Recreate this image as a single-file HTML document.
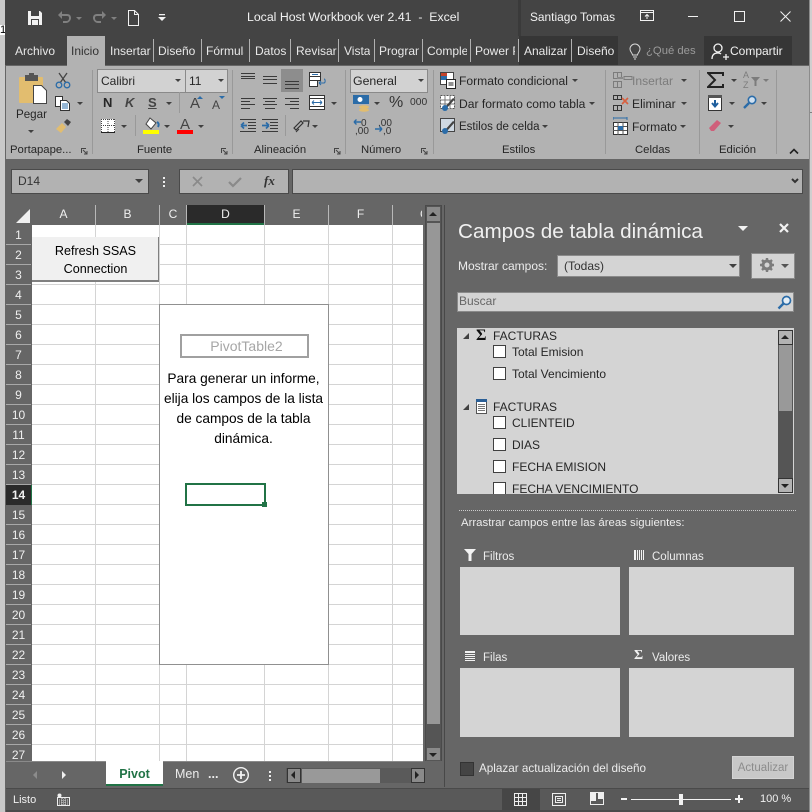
<!DOCTYPE html>
<html><head><meta charset="utf-8">
<style>
html,body{margin:0;padding:0;background:#fff}
#r{position:relative;width:812px;height:812px;overflow:hidden;background:#666;font-family:"Liberation Sans",sans-serif;font-size:12px;color:#262626}
#r div,#r span.t,#r svg{position:absolute}
.t{position:absolute;white-space:nowrap;line-height:16px}
.tab{position:absolute;top:43px;color:#e8e8e8;font-size:12px;white-space:nowrap;line-height:16px;overflow:hidden}
.sep{background:#b0b0b0;width:1px;top:39px;height:23px}
.rs{background:#999;width:1px;top:70px;height:84px}
.ar{width:0;height:0;border-left:3px solid transparent;border-right:3px solid transparent;border-top:3px solid #404040}
.gl{background:#d4d4d4;width:1px;top:225px;height:536px}
.ch{top:205px;height:19px;color:#f0f0f0;text-align:center;line-height:19px;font-size:12px}
.rh{left:6px;width:25px;height:19px;border-bottom:1px solid #a8a8a8;color:#f0f0f0;text-align:center;line-height:21px;font-size:12px;background:#666}
.g{color:#262626;font-size:12.1px}
.pl{color:#ececec;font-size:12px}
.area{background:#d4d4d4}
.cb{left:493px;width:11px;height:11px;background:#fff;border:1px solid #404040}
.f{left:512px;color:#262626;font-size:12px}
</style></head><body><div id="r">

<!-- outer edge -->
<div style="left:0;top:0;width:5px;height:812px;background:#c9c9c9"></div>
<div style="left:0;top:25px;width:5px;height:10px;background:#fff"></div>
<span class="t" style="left:0;top:22px;font-size:11px;color:#000;width:5px;overflow:hidden">1</span>

<!-- title -->
<div style="left:5px;top:0;width:807px;height:65px;background:#444"></div>
<div style="left:518px;top:0;width:3px;height:36px;background:#3a3a3a"></div>
<svg style="left:27px;top:10px" width="16" height="16" viewBox="0 0 16 16"><path d="M1 1h12l2 2v12H1z" fill="#f2f2f2"/><rect x="4" y="1" width="8" height="5" fill="#444"/><rect x="4" y="9" width="8" height="6" fill="#444"/><rect x="5" y="10" width="6" height="5" fill="#f2f2f2"/></svg>
<svg style="left:56px;top:10px" width="30" height="16" viewBox="0 0 30 16"><path d="M2 5l4-4v3h5c3 0 4 2 4 4s-2 5-5 5H7v-2h3c2 0 3-1 3-3s-1-2-3-2H6v3z" fill="#808080"/><path d="M20 7h6l-3 3z" fill="#808080"/></svg>
<svg style="left:91px;top:10px" width="30" height="16" viewBox="0 0 30 16"><path d="M15 5l-4-4v3H6c-3 0-4 2-4 4s2 5 5 5h3v-2H7c-2 0-3-1-3-3s1-2 3-2h4v3z" fill="#808080"/><path d="M20 7h6l-3 3z" fill="#808080"/></svg>
<svg style="left:127px;top:10px" width="13" height="16" viewBox="0 0 13 16"><path d="M1.500.5h6l4 4v11h-10z M7.500.5v4h4" fill="none" stroke="#f2f2f2"/></svg>
<svg style="left:158px;top:14px" width="9" height="8" viewBox="0 0 9 8"><path d="M1 0h6v1.300H1zM0 3h8L4 7z" fill="#f2f2f2"/></svg>
<span class="t" style="left:247px;top:9px;color:#f2f2f2;font-size:12.3px">Local Host Workbook ver 2.41&nbsp; -&nbsp; Excel</span>
<span class="t" style="left:530px;top:9px;color:#f2f2f2;font-size:11.9px">Santiago Tomas</span>
<svg style="left:640px;top:10px" width="14" height="12" viewBox="0 0 14 12"><path d="M.5.500h13v10H.5zM.5 2.500h13M7 9V4.500M5 6.500l2-2 2 2" fill="none" stroke="#f2f2f2"/></svg>
<div style="left:688px;top:16px;width:10px;height:1px;background:#f2f2f2"></div>
<div style="left:734px;top:11px;width:9px;height:9px;border:1px solid #f2f2f2"></div>
<svg style="left:780px;top:11px" width="11" height="11" viewBox="0 0 11 11"><path d="M.5.500l10 10M10.500.500l-10 10" stroke="#f2f2f2" fill="none"/></svg>

<!-- tabs -->
<div style="left:519px;top:36px;width:99px;height:29px;background:#363636"></div>
<div style="left:704px;top:36px;width:88px;height:29px;background:#363636"></div>
<div style="left:67px;top:36px;width:38px;height:30px;background:#b2b2b2"></div>
<span class="tab" style="left:15px">Archivo</span>
<span class="tab" style="left:71px;color:#333">Inicio</span>
<span class="tab" style="left:110px">Insertar</span>
<div class="sep" style="left:153px"></div>
<span class="tab" style="left:158px">Diseño</span>
<div class="sep" style="left:201px"></div>
<span class="tab" style="left:206px;width:38px">Fórmulas</span>
<div class="sep" style="left:249px"></div>
<span class="tab" style="left:255px">Datos</span>
<div class="sep" style="left:290px"></div>
<span class="tab" style="left:296px">Revisar</span>
<div class="sep" style="left:338px"></div>
<span class="tab" style="left:344px">Vista</span>
<div class="sep" style="left:374px"></div>
<span class="tab" style="left:379px;width:40px">Programador</span>
<div class="sep" style="left:422px"></div>
<span class="tab" style="left:427px;width:40px">Complementos</span>
<div class="sep" style="left:470px"></div>
<span class="tab" style="left:475px;width:40px">Power Pivot</span>
<div class="sep" style="left:518px"></div>
<span class="tab" style="left:524px">Analizar</span>
<div class="sep" style="left:571px"></div>
<span class="tab" style="left:577px">Diseño</span>
<svg style="left:628px;top:43px" width="14" height="17" viewBox="0 0 14 17"><path d="M4.500 12c0-2-2.500-3-2.500-6a5 5 0 0 1 10 0c0 3-2.500 4-2.500 6zM5 14h4M6 16h2" fill="none" stroke="#d8d8d8"/></svg>
<span class="tab" style="left:646px;color:#9a9a9a;font-size:11.3px">¿Qué des</span>
<svg style="left:711px;top:43px" width="18" height="17" viewBox="0 0 18 17"><circle cx="7" cy="5" r="4" fill="none" stroke="#f2f2f2" stroke-width="1.300"/><path d="M1 16c0-4 2-6 6-6 1.500 0 2.500.5 3 1M12 14h6M15 11v6" fill="none" stroke="#f2f2f2" stroke-width="1.300"/></svg>
<span class="tab" style="left:730px;color:#f2f2f2">Compartir</span>

<!-- ribbon -->
<div style="left:6px;top:66px;width:803px;height:93px;background:#b2b2b2"></div>
<div class="rs" style="left:92px"></div><div class="rs" style="left:232px"></div><div class="rs" style="left:345px"></div><div class="rs" style="left:433px"></div><div class="rs" style="left:605px"></div><div class="rs" style="left:699px"></div><div class="rs" style="left:776px"></div>

<!-- clipboard -->
<svg style="left:18px;top:73px" width="30" height="32" viewBox="0 0 30 32"><rect x="1" y="4" width="24" height="26" rx="1" fill="#e2bd6f"/><rect x="7" y="2" width="13" height="6" fill="#555"/><rect x="11" y="0" width="5" height="3" fill="#555"/><path d="M15.500 12.500h8l5 5v13h-13z" fill="#fff" stroke="#444"/></svg>
<span class="t" style="left:16px;top:107px;font-size:11.6px">Pegar</span>
<div class="ar" style="left:28px;top:130px"></div>
<svg style="left:55px;top:72px" width="16" height="17" viewBox="0 0 16 17"><path d="M4 1l7 10M12 1L5 11" stroke="#444" stroke-width="1.300" fill="none"/><circle cx="4" cy="13" r="2.800" fill="none" stroke="#2b6ca8" stroke-width="1.300"/><circle cx="12" cy="13" r="2.800" fill="none" stroke="#2b6ca8" stroke-width="1.300"/></svg>
<svg style="left:55px;top:96px" width="16" height="15" viewBox="0 0 16 15"><path d="M.5.500h7v10h-7z" fill="#fff" stroke="#333"/><path d="M5.500 4.500h6l3 3v7h-9z" fill="#fff" stroke="#333"/><path d="M7 8h6M7 10h6M7 12h6" stroke="#2b6ca8"/></svg>
<div class="ar" style="left:77px;top:102px"></div>
<svg style="left:55px;top:118px" width="17" height="16" viewBox="0 0 17 16"><path d="M1 11l6-6 4 4-5 6z" fill="#e2bd6f"/><path d="M9 4l3-3 4 3-3 4z" fill="#444"/></svg>
<span class="t" style="left:10px;top:142px;font-size:11.3px">Portapape...</span>
<svg style="left:81px;top:148px" width="7" height="7" viewBox="0 0 7 7"><path d="M.5 5V.5H5M2 2l4 4M6 3v3H3" fill="none" stroke="#444"/></svg>

<!-- font -->
<div style="left:97px;top:69px;width:87px;height:22px;background:#d2d2d2;border:1px solid #8a8a8a"></div>
<div style="left:185px;top:69px;width:41px;height:22px;background:#d2d2d2;border:1px solid #8a8a8a"></div>
<span class="t" style="left:101px;top:73px;font-size:12px">Calibri</span>
<span class="t" style="left:189px;top:73px;font-size:12px">11</span>
<div class="ar" style="left:175px;top:79px"></div><div class="ar" style="left:218px;top:79px"></div>
<span class="t" style="left:103px;top:95px;font-weight:bold;font-size:13px">N</span>
<span class="t" style="left:125px;top:95px;font-weight:bold;font-style:italic;font-size:13px;color:#444">K</span>
<span class="t" style="left:148px;top:95px;font-weight:bold;font-size:13px;color:#444;text-decoration:underline">S</span>
<div class="ar" style="left:166px;top:102px"></div>
<div style="left:179px;top:92px;width:1px;height:21px;background:#999"></div>
<span class="t" style="left:190px;top:96px;font-size:15px;color:#444">A</span>
<div style="left:197px;top:96px;width:0;height:0;border-left:3px solid transparent;border-right:3px solid transparent;border-bottom:3px solid #2b6ca8"></div>
<span class="t" style="left:212px;top:97px;font-size:12px;color:#444">A</span>
<div style="left:219px;top:96px;width:0;height:0;border-left:3px solid transparent;border-right:3px solid transparent;border-top:3px solid #2b6ca8"></div>
<svg style="left:101px;top:119px" width="14" height="14" viewBox="0 0 14 14"><rect width="14" height="13" fill="#fff"/><path d="M0 .500h14M.5 0v13M13.500 0v13M0 6.500h14M7 0v13" stroke="#444" stroke-dasharray="1 1" fill="none"/><path d="M0 13.500h14" stroke="#222"/></svg>
<div class="ar" style="left:121px;top:125px"></div>
<div style="left:135px;top:115px;width:1px;height:21px;background:#999"></div>
<svg style="left:145px;top:117px" width="15" height="13" viewBox="0 0 15 13"><path d="M5 1l6 5-5 6-5-5z" fill="#fff" stroke="#444"/><path d="M12 5c2 1 2 3 1 5" stroke="#2b6ca8" stroke-width="2" fill="none"/></svg>
<div style="left:143px;top:130px;width:16px;height:4px;background:#ffff00"></div>
<div class="ar" style="left:164px;top:125px"></div>
<span class="t" style="left:180px;top:117px;font-size:15px;color:#444">A</span>
<div style="left:177px;top:130px;width:16px;height:4px;background:#ff0000"></div>
<div class="ar" style="left:198px;top:125px"></div>
<span class="t" style="left:137px;top:142px;font-size:11.3px">Fuente</span>
<svg style="left:221px;top:148px" width="7" height="7" viewBox="0 0 7 7"><path d="M.5 5V.5H5M2 2l4 4M6 3v3H3" fill="none" stroke="#444"/></svg>

<!-- alignment -->
<div style="left:281px;top:69px;width:22px;height:23px;background:#8d8d8d"></div>
<svg style="left:240px;top:71px" width="60" height="18" viewBox="0 0 60 18"><path d="M1 2.500h14M1 5.500h14M1 7.500h14M23 5.500h14M23 8.500h14M23 12.500h14M45 10.500h14M45 13.500h14M45 17.500h14" stroke="#3a3a3a"/></svg>
<svg style="left:309px;top:72px" width="17" height="16" viewBox="0 0 17 16"><path d="M.5.500h11v4H.5zM.5 4.500h11v4H.5zM.5 8.500h8v6H.5z" fill="#fff" stroke="#333"/><path d="M3 2.500h6" stroke="#2b6ca8"/><path d="M10 11h5c1.500 0 1.500-4 0-4M10 11l2-2M10 11l2 2" stroke="#2b6ca8" fill="none"/></svg>
<svg style="left:240px;top:97px" width="60" height="12" viewBox="0 0 60 12"><path d="M1 1.500h14M1 4.500h9M1 7.500h14M1 11.500h9M23 1.500h14M25 4.500h10M23 7.500h14M25 11.500h10M45 1.500h14M50 4.500h9M45 7.500h14M50 11.500h9" stroke="#3a3a3a"/></svg>
<svg style="left:309px;top:95px" width="16" height="15" viewBox="0 0 16 15"><path d="M.5.500h15v14H.5z" fill="#fff" stroke="#333"/><path d="M0 3.500h16M0 11.500h16" stroke="#333"/><path d="M3 7.500h10M3 7.500l2-2M3 7.500l2 2M13 7.500l-2-2M13 7.500l-2 2" stroke="#2b6ca8" fill="none"/></svg>
<div class="ar" style="left:331px;top:102px"></div>
<svg style="left:240px;top:119px" width="38" height="13" viewBox="0 0 38 13"><path d="M0 .500h16M8 3.500h8M8 6.500h8M8 9.500h8M0 12.500h16M22 .500h16M30 3.500h8M30 6.500h8M30 9.500h8M22 12.500h16" stroke="#3a3a3a"/><path d="M1 6.500h6M1 6.500l3-3M1 6.500l3 3M22 6.500h7M29 6.500l-3-3M29 6.500l-3 3" stroke="#2b6ca8" stroke-width="1.700" fill="none"/></svg>
<div style="left:285px;top:115px;width:1px;height:21px;background:#999"></div>
<svg style="left:293px;top:119px" width="17" height="15" viewBox="0 0 17 15"><path d="M1 9l7-7 2 2-7 7zM10 2l6 0-1 6" fill="none" stroke="#333" stroke-width="1.200"/><path d="M3 13l3-3" stroke="#333"/></svg>
<div class="ar" style="left:312px;top:125px"></div>
<span class="t" style="left:254px;top:142px;font-size:11.3px">Alineación</span>
<svg style="left:334px;top:148px" width="7" height="7" viewBox="0 0 7 7"><path d="M.5 5V.5H5M2 2l4 4M6 3v3H3" fill="none" stroke="#444"/></svg>

<!-- number -->
<div style="left:350px;top:69px;width:76px;height:22px;background:#d2d2d2;border:1px solid #8a8a8a"></div>
<span class="t" style="left:353px;top:73px;font-size:12.3px">General</span>
<div class="ar" style="left:418px;top:79px"></div>
<svg style="left:353px;top:95px" width="18" height="17" viewBox="0 0 18 17"><rect width="16" height="9" fill="#2b6ca8"/><circle cx="7" cy="4.500" r="2.500" fill="#fff"/><ellipse cx="11" cy="12" rx="5" ry="1.800" fill="#e2bd6f"/><ellipse cx="11" cy="15" rx="5" ry="1.800" fill="#e2bd6f"/></svg>
<div class="ar" style="left:374px;top:102px"></div>
<span class="t" style="left:389px;top:95px;font-size:16px;color:#333">%</span>
<span class="t" style="left:410px;top:95px;font-size:10.3px;color:#333">000</span>
<svg style="left:353px;top:119px" width="8" height="6" viewBox="0 0 8 6"><path d="M1 3h7M1 3l2.500-2.500M1 3l2.500 2.500" stroke="#2b6ca8" stroke-width="1.400" fill="none"/></svg>
<span class="t" style="left:361px;top:116px;font-size:10px;color:#333">0</span>
<span class="t" style="left:355px;top:124px;font-size:10px;color:#333">,00</span>
<span class="t" style="left:378px;top:116px;font-size:10px;color:#333">,00</span>
<svg style="left:375px;top:126px" width="8" height="6" viewBox="0 0 8 6"><path d="M0 3h7M7 3L4.500.5M7 3L4.500 5.500" stroke="#2b6ca8" stroke-width="1.400" fill="none"/></svg>
<span class="t" style="left:383px;top:124px;font-size:10px;color:#333">,0</span>
<span class="t" style="left:361px;top:142px;font-size:11.3px">Número</span>
<svg style="left:421px;top:148px" width="7" height="7" viewBox="0 0 7 7"><path d="M.5 5V.5H5M2 2l4 4M6 3v3H3" fill="none" stroke="#444"/></svg>

<!-- styles -->
<svg style="left:440px;top:72px" width="16" height="17" viewBox="0 0 16 17"><rect x=".5" y=".5" width="13" height="12" fill="#fff" stroke="#444"/><rect x="1" y="1" width="6" height="3" fill="#c5432a"/><rect x="1" y="4" width="6" height="4" fill="#2b6ca8"/><rect x="6.500" y="7.500" width="9" height="9" fill="#fff" stroke="#222"/><path d="M8.500 11h5M8.500 13h5" stroke="#222"/></svg>
<span class="t g" style="left:459px;top:73px">Formato condicional</span><div class="ar" style="left:572px;top:79px"></div>
<svg style="left:440px;top:95px" width="16" height="17" viewBox="0 0 16 17"><rect x=".5" y=".5" width="14" height="13" fill="#fff" stroke="#555" stroke-dasharray="2 1"/><path d="M0 5h14M0 9h14M5 0v14M10 0v14" stroke="#777"/><path d="M15 4l-8 9-3 3 1-4 8-9z" fill="#444"/><circle cx="5" cy="13" r="3" fill="#2b6ca8"/></svg>
<span class="t g" style="left:459px;top:96px">Dar formato como tabla</span><div class="ar" style="left:589px;top:102px"></div>
<svg style="left:440px;top:118px" width="16" height="17" viewBox="0 0 16 17"><rect x=".5" y=".5" width="14" height="13" fill="#cfd9e3" stroke="#444"/><path d="M15 4l-8 9-3 3 1-4 8-9z" fill="#444"/><circle cx="5" cy="13" r="3" fill="#2b6ca8"/></svg>
<span class="t g" style="left:459px;top:119px;font-size:11.5px">Estilos de celda</span><div class="ar" style="left:542px;top:125px"></div>
<span class="t" style="left:502px;top:142px;font-size:11.3px">Estilos</span>

<!-- cells -->
<svg style="left:613px;top:72px" width="20" height="16" viewBox="0 0 20 16"><path d="M.5.500h8v6h-8zM.5 9.500h8v6h-8zM4.500 9v7M4.500 0v7M11 4.500h8v3h-8z" fill="none" stroke="#7c7c7c"/><path d="M10 6H4" stroke="#8a8a8a" stroke-width="2"/></svg>
<span class="t g" style="left:632px;top:73px;color:#7c7c7c">Insertar</span><div class="ar" style="left:681px;top:79px"></div>
<svg style="left:613px;top:95px" width="20" height="16" viewBox="0 0 20 16"><path d="M.5.500h8v4h-8zM.5 10.500h8v5h-8zM4.500 10v6M4.500 0v5" fill="none" stroke="#333"/><path d="M9 3l6 6M15 3l-6 6" stroke="#d8603f" stroke-width="1.600"/></svg>
<span class="t g" style="left:632px;top:96px">Eliminar</span><div class="ar" style="left:681px;top:102px"></div>
<svg style="left:613px;top:117px" width="18" height="18" viewBox="0 0 18 18"><path d="M0 1h14M0 0v3M14 0v3" stroke="#2b6ca8"/><rect x=".5" y="5.500" width="14" height="12" fill="#fff" stroke="#333"/><path d="M0 9.500h14M0 13.500h14M5 5v13M10 5v13" stroke="#555"/><rect x="5" y="9" width="5" height="4" fill="#2b6ca8"/></svg>
<span class="t g" style="left:632px;top:119px">Formato</span><div class="ar" style="left:680px;top:125px"></div>
<span class="t" style="left:635px;top:142px;font-size:11.3px">Celdas</span>

<!-- edit -->
<svg style="left:707px;top:72px" width="17" height="16" viewBox="0 0 17 16"><path d="M16 4V1H1l7 7-7 7h15v-3" fill="none" stroke="#222" stroke-width="2"/></svg>
<div class="ar" style="left:731px;top:79px"></div>
<span class="t" style="left:743px;top:70px;font-size:9px;line-height:10px;color:#7c7c7c;white-space:pre">A
Z</span>
<svg style="left:751px;top:77px" width="9" height="9" viewBox="0 0 9 9"><path d="M0 0h9L5.500 4v5h-2V4z" fill="#7c7c7c"/></svg>
<div class="ar" style="left:763px;top:79px;border-top-color:#7c7c7c"></div>
<svg style="left:708px;top:95px" width="14" height="16" viewBox="0 0 14 16"><rect x=".5" y=".5" width="13" height="15" fill="#fff" stroke="#333"/><rect x="0" y="0" width="14" height="3" fill="#555"/><path d="M7 5v6M4 8l3 3.500L10 8" stroke="#1f5f9e" stroke-width="2" fill="none"/></svg>
<div class="ar" style="left:729px;top:102px"></div>
<svg style="left:743px;top:95px" width="14" height="15" viewBox="0 0 14 15"><circle cx="9" cy="5" r="3.700" fill="#cfe0f0" stroke="#2b6ca8" stroke-width="1.600"/><path d="M6 8l-5 5" stroke="#2b6ca8" stroke-width="2.400"/></svg>
<div class="ar" style="left:761px;top:102px"></div>
<svg style="left:708px;top:119px" width="14" height="13" viewBox="0 0 14 13"><path d="M1 9l8-8 4 3-7 8H3z" fill="#cf5f7a"/></svg>
<div class="ar" style="left:728px;top:125px"></div>
<span class="t" style="left:719px;top:142px;font-size:11.3px">Edición</span>
<svg style="left:789px;top:148px" width="10" height="7" viewBox="0 0 10 7"><path d="M1 5.500l4-4 4 4" fill="none" stroke="#222" stroke-width="1.600"/></svg>

<!-- formula bar -->
<div style="left:6px;top:159px;width:803px;height:46px;background:#666"></div>
<div style="left:11px;top:169px;width:136px;height:23px;background:#b2b2b2;border:1px solid #4a4a4a"></div>
<span class="t" style="left:18px;top:173px;font-size:12px;color:#333">D14</span>
<div class="ar" style="left:135px;top:179px;border-left-width:4px;border-right-width:4px;border-top-width:4px"></div>
<div style="left:163px;top:177px;width:2px;height:2px;background:#eee;box-shadow:0 4px #eee,0 8px #eee"></div>
<div style="left:179px;top:169px;width:108px;height:23px;background:#b2b2b2;border:1px solid #4a4a4a"></div>
<svg style="left:191px;top:176px" width="13" height="12" viewBox="0 0 13 12"><path d="M2 1l9 9M11 1L2 10" stroke="#8a8a8a" stroke-width="1.700"/></svg>
<svg style="left:227px;top:176px" width="16" height="12" viewBox="0 0 16 12"><path d="M2 6l4 4 8-8" stroke="#8a8a8a" stroke-width="2.200" fill="none"/></svg>
<span class="t" style="left:264px;top:173px;font-family:'Liberation Serif',serif;font-style:italic;font-weight:bold;font-size:13px;color:#333">fx</span>
<div style="left:292px;top:169px;width:509px;height:23px;background:#b2b2b2;border:1px solid #4a4a4a"></div>
<svg style="left:791px;top:178px" width="8" height="6" viewBox="0 0 8 6"><path d="M1 1l3 3 3-3" fill="none" stroke="#333" stroke-width="2"/></svg>

<!-- headers -->
<div style="left:6px;top:205px;width:417px;height:20px;background:#666"></div>
<svg style="left:15px;top:209px" width="15" height="15" viewBox="0 0 15 15"><path d="M15 0v14H1z" fill="#f0f0f0"/></svg>
<div class="ch" style="left:32px;width:63px">A</div>
<div class="ch" style="left:96px;width:63px">B</div>
<div class="ch" style="left:160px;width:26px">C</div>
<div class="ch" style="left:187px;width:77px;background:#2a2a2a;height:18px;line-height:18px">D</div>
<div style="left:187px;top:223px;width:78px;height:2px;background:#217346"></div>
<div class="ch" style="left:265px;width:63px">E</div>
<div class="ch" style="left:329px;width:63px">F</div>
<div class="ch" style="left:393px;width:29px;overflow:hidden;text-align:left;padding-left:27px;box-sizing:border-box">G</div>
<div style="left:95px;top:205px;width:1px;height:20px;background:#b8b8b8"></div>
<div style="left:159px;top:205px;width:1px;height:20px;background:#b8b8b8"></div>
<div style="left:186px;top:205px;width:1px;height:20px;background:#b8b8b8"></div>
<div style="left:264px;top:205px;width:1px;height:20px;background:#b8b8b8"></div>
<div style="left:328px;top:205px;width:1px;height:20px;background:#b8b8b8"></div>
<div style="left:392px;top:205px;width:1px;height:20px;background:#b8b8b8"></div>

<!-- grid -->
<div style="left:32px;top:225px;width:391px;height:536px;background-color:#fff;background-image:repeating-linear-gradient(to bottom,transparent 0,transparent 19px,#d4d4d4 19px,#d4d4d4 20px)"></div>
<div class="gl" style="left:95px"></div><div class="gl" style="left:159px"></div><div class="gl" style="left:186px"></div><div class="gl" style="left:264px"></div><div class="gl" style="left:328px"></div><div class="gl" style="left:392px"></div>
<div class="rh" style="top:225px">1</div><div class="rh" style="top:245px">2</div><div class="rh" style="top:265px">3</div><div class="rh" style="top:285px">4</div><div class="rh" style="top:305px">5</div><div class="rh" style="top:325px">6</div><div class="rh" style="top:345px">7</div><div class="rh" style="top:365px">8</div><div class="rh" style="top:385px">9</div><div class="rh" style="top:405px">10</div><div class="rh" style="top:425px">11</div><div class="rh" style="top:445px">12</div><div class="rh" style="top:465px">13</div><div class="rh" style="top:485px;background:#2a2a2a;border-bottom-color:#2a2a2a;font-weight:bold">14</div><div class="rh" style="top:505px">15</div><div class="rh" style="top:525px">16</div><div class="rh" style="top:545px">17</div><div class="rh" style="top:565px">18</div><div class="rh" style="top:585px">19</div><div class="rh" style="top:605px">20</div><div class="rh" style="top:625px">21</div><div class="rh" style="top:645px">22</div><div class="rh" style="top:665px">23</div><div class="rh" style="top:685px">24</div><div class="rh" style="top:705px">25</div><div class="rh" style="top:725px">26</div><div class="rh" style="top:745px;height:16px;border:0;overflow:hidden">27</div>
<div style="left:31px;top:485px;width:1px;height:20px;background:#217346"></div>

<!-- button -->
<div style="left:32px;top:237px;width:126px;height:43px;background:#f0f0f0;border-right:1px solid #808080;border-bottom:2px solid #808080"></div>
<span class="t" style="left:32px;top:242px;width:127px;text-align:center;color:#000;font-size:12.6px;line-height:18px;white-space:normal">Refresh SSAS<br>Connection</span>

<!-- pivot box -->
<div style="left:159px;top:304px;width:168px;height:359px;background:#fff;border:1px solid #909090"></div>
<div style="left:180px;top:334px;width:125px;height:20px;border:2px solid #a0a0a0;background:#fff"></div>
<span class="t" style="left:182px;top:338px;width:129px;text-align:center;color:#a6a6a6;font-size:14px">PivotTable2</span>
<span class="t" style="left:160px;top:369px;width:167px;text-align:center;color:#000;font-size:13.7px;line-height:20px">Para generar un informe,<br>elija los campos de la lista<br>de campos de la tabla<br>dinámica.</span>
<div style="left:185px;top:483px;width:77px;height:19px;border:2px solid #217346"></div>
<div style="left:262px;top:502px;width:5px;height:5px;background:#217346"></div>

<!-- v scroll -->
<div style="left:423px;top:205px;width:21px;height:556px;background:#666"></div>
<div style="left:426px;top:206px;width:15px;height:555px;background:#555;box-shadow:0 0 0 1px #4a4a4a"></div>
<div style="left:427px;top:207px;width:13px;height:14px;background:#8a8a8a"></div>
<div style="left:429px;top:212px;width:0;height:0;border-left:4px solid transparent;border-right:4px solid transparent;border-bottom:4px solid #222"></div>
<div style="left:427px;top:223px;width:13px;height:501px;background:#979797"></div>
<div style="left:427px;top:748px;width:13px;height:12px;background:#8a8a8a"></div>
<div style="left:429px;top:753px;width:0;height:0;border-left:4px solid transparent;border-right:4px solid transparent;border-top:4px solid #222"></div>

<!-- sheet tabs -->
<div style="left:6px;top:761px;width:437px;height:28px;background:#666"></div>
<div style="left:6px;top:761px;width:100px;height:1px;background:#8a8a8a"></div>
<div style="left:163px;top:761px;width:260px;height:1px;background:#8a8a8a"></div>
<div style="left:33px;top:771px;width:0;height:0;border-top:4px solid transparent;border-bottom:4px solid transparent;border-right:4px solid #8c8c8c"></div>
<div style="left:62px;top:771px;width:0;height:0;border-top:4px solid transparent;border-bottom:4px solid transparent;border-left:4px solid #f0f0f0"></div>
<div style="left:106px;top:761px;width:57px;height:23px;background:#fff"></div>
<div style="left:106px;top:784px;width:57px;height:2px;background:#217346"></div>
<span class="t" style="left:106px;top:766px;width:57px;text-align:center;color:#217346;font-weight:bold;font-size:12.5px">Pivot</span>
<span class="t" style="left:175px;top:766px;color:#ececec;font-size:12.5px">Men</span>
<span class="t" style="left:208px;top:766px;color:#ececec;font-size:12.5px;font-weight:bold">...</span>
<svg style="left:232px;top:766px" width="18" height="18" viewBox="0 0 18 18"><circle cx="9" cy="9" r="7.300" fill="none" stroke="#f2f2f2" stroke-width="1.400"/><path d="M5 9h8M9 5v8" stroke="#f2f2f2" stroke-width="1.800"/></svg>
<div style="left:269px;top:771px;width:2px;height:2px;background:#eee;box-shadow:0 4px #eee,0 8px #eee"></div>
<div style="left:286px;top:768px;width:139px;height:15px;background:#5a5a5a"></div>
<div style="left:287px;top:768px;width:12px;height:13px;background:#8a8a8a;border:1px solid #333"></div>
<div style="left:291px;top:771px;width:0;height:0;border-top:4px solid transparent;border-bottom:4px solid transparent;border-right:4px solid #222"></div>
<div style="left:302px;top:769px;width:78px;height:14px;background:#999"></div>
<div style="left:411px;top:768px;width:12px;height:13px;background:#8a8a8a;border:1px solid #333"></div>
<div style="left:415px;top:771px;width:0;height:0;border-top:4px solid transparent;border-bottom:4px solid transparent;border-left:4px solid #222"></div>

<!-- pane -->
<div style="left:444px;top:205px;width:365px;height:584px;background:#666"></div>
<div style="left:444px;top:205px;width:1px;height:582px;background:#484848"></div>
<span class="t" style="left:458px;top:220px;color:#f0f0f0;font-size:20.7px;line-height:24px">Campos de tabla dinámica</span>
<div style="left:738px;top:226px;width:0;height:0;border-left:5px solid transparent;border-right:5px solid transparent;border-top:5px solid #f2f2f2"></div>
<svg style="left:778px;top:222px" width="12" height="12" viewBox="0 0 12 12"><path d="M2 2l8 8M10 2l-8 8" stroke="#f2f2f2" stroke-width="2.200"/></svg>
<span class="t pl" style="left:458px;top:258px">Mostrar campos:</span>
<div style="left:557px;top:255px;width:181px;height:20px;background:#d4d4d4;border:1px solid #8a8a8a"></div>
<span class="t" style="left:564px;top:258px;font-size:12px;color:#333">(Todas)</span>
<div class="ar" style="left:729px;top:264px;border-left-width:4px;border-right-width:4px;border-top-width:4px"></div>
<div style="left:751px;top:253px;width:42px;height:24px;background:#d4d4d4;border:1px solid #8a8a8a"></div>
<svg style="left:759px;top:257px" width="16" height="16" viewBox="0 0 16 16"><circle cx="8" cy="8" r="4" fill="none" stroke="#7c7c7c" stroke-width="3"/><path d="M8 1v3M8 12v3M1 8h3M12 8h3M3 3l2 2M11 11l2 2M13 3l-2 2M3 13l2-2" stroke="#7c7c7c" stroke-width="2.400"/></svg>
<div class="ar" style="left:781px;top:264px;border-left-width:4px;border-right-width:4px;border-top-width:4px;border-top-color:#555"></div>
<div style="left:457px;top:292px;width:335px;height:18px;background:#d4d4d4;border:1px solid #8a8a8a"></div>
<span class="t" style="left:459px;top:293px;font-size:12px;color:#666">Buscar</span>
<svg style="left:777px;top:295px" width="15" height="15" viewBox="0 0 15 15"><circle cx="9.500" cy="5.500" r="4" fill="#e4eef6" stroke="#2b6ca8" stroke-width="1.700"/><path d="M6.500 8.500L1.500 13.500" stroke="#2b6ca8" stroke-width="2.400"/></svg>

<!-- field list -->
<div style="left:457px;top:328px;width:337px;height:166px;background:#d4d4d4;overflow:hidden"></div>
<div style="left:463px;top:333px;width:0;height:0;border-bottom:6px solid #404040;border-left:6px solid transparent"></div>
<span class="t" style="left:476px;top:328px;font-family:'Liberation Serif',serif;font-weight:bold;font-size:16px;color:#111">Σ</span>
<span class="t f" style="left:493px;top:328px">FACTURAS</span>
<div class="cb" style="top:345px"></div><span class="t f" style="top:344px">Total Emision</span>
<div class="cb" style="top:367px"></div><span class="t f" style="top:366px">Total Vencimiento</span>
<div style="left:463px;top:404px;width:0;height:0;border-bottom:6px solid #404040;border-left:6px solid transparent"></div>
<svg style="left:476px;top:399px" width="11" height="15" viewBox="0 0 11 15"><rect x=".5" y=".5" width="10" height="14" fill="#fff" stroke="#555"/><rect width="11" height="3" fill="#2b5f96"/><path d="M2 5.500h7M2 7.500h7M2 9.500h7M2 11.500h7" stroke="#777"/></svg>
<span class="t f" style="left:493px;top:399px">FACTURAS</span>
<div class="cb" style="top:416px"></div><span class="t f" style="top:415px">CLIENTEID</span>
<div class="cb" style="top:438px"></div><span class="t f" style="top:437px">DIAS</span>
<div class="cb" style="top:460px"></div><span class="t f" style="top:459px">FECHA EMISION</span>
<div style="left:493px;top:482px;width:11px;height:11px;background:#fff;border:1px solid #404040;border-bottom:0"></div>
<div style="left:512px;top:481px;height:13px;overflow:hidden;color:#262626;font-size:12px;line-height:16px;white-space:nowrap">FECHA VENCIMIENTO</div>
<div style="left:778px;top:330px;width:15px;height:162px;background:#555"></div>
<div style="left:778px;top:330px;width:13px;height:13px;background:#b2b2b2;border:1px solid #333"></div>
<div style="left:781px;top:335px;width:0;height:0;border-left:4px solid transparent;border-right:4px solid transparent;border-bottom:4px solid #222"></div>
<div style="left:779px;top:345px;width:13px;height:66px;background:#999"></div>
<div style="left:778px;top:478px;width:13px;height:13px;background:#b2b2b2;border:1px solid #333"></div>
<div style="left:781px;top:484px;width:0;height:0;border-left:4px solid transparent;border-right:4px solid transparent;border-top:4px solid #222"></div>

<div style="left:459px;top:510px;width:337px;height:1px;background:repeating-linear-gradient(to right,#ccc 0,#ccc 1px,transparent 1px,transparent 2px)"></div>
<span class="t pl" style="left:461px;top:515px;font-size:11.4px">Arrastrar campos entre las áreas siguientes:</span>

<svg style="left:464px;top:549px" width="12" height="12" viewBox="0 0 12 12"><path d="M0 0h12L7.500 5v7h-3V5z" fill="#f2f2f2"/></svg>
<span class="t pl" style="left:483px;top:549px;font-size:11.5px">Filtros</span>
<svg style="left:634px;top:550px" width="10" height="10" viewBox="0 0 10 10"><path d="M0 0h2v10H0zM3 0h1v10H3zM5 0h1v10H5zM7 0h1v10H7zM9 0h1v10H9z" fill="#f2f2f2"/></svg>
<span class="t pl" style="left:652px;top:549px;font-size:11.5px">Columnas</span>
<div class="area" style="left:460px;top:567px;width:160px;height:68px"></div>
<div class="area" style="left:629px;top:567px;width:165px;height:68px"></div>
<svg style="left:465px;top:651px" width="10" height="10" viewBox="0 0 10 10"><path d="M0 0h10v2H0zM0 3h10v1H0zM0 5h10v1H0zM0 7h10v1H0zM0 9h10v1H0z" fill="#f2f2f2"/></svg>
<span class="t pl" style="left:483px;top:650px;font-size:11.5px">Filas</span>
<span class="t" style="left:634px;top:648px;font-family:'Liberation Serif',serif;font-weight:bold;font-size:14px;color:#f2f2f2">Σ</span>
<span class="t pl" style="left:652px;top:650px;font-size:11.5px">Valores</span>
<div class="area" style="left:460px;top:668px;width:160px;height:69px"></div>
<div class="area" style="left:629px;top:668px;width:165px;height:69px"></div>
<div style="left:460px;top:762px;width:12px;height:12px;background:#444;border:1px solid #333"></div>
<span class="t pl" style="left:479px;top:761px;font-size:11.7px">Aplazar actualización del diseño</span>
<div style="left:732px;top:756px;width:60px;height:21px;background:#c8c8c8;border:1px solid #d4d4d4"></div>
<span class="t" style="left:732px;top:760px;width:62px;text-align:center;color:#8c8c8c;font-size:11.5px">Actualizar</span>

<!-- status -->
<div style="left:6px;top:789px;width:804px;height:23px;background:#595959"></div>
<div style="left:6px;top:788px;width:803px;height:1px;background:#4a4a4a"></div>
<div style="left:6px;top:810px;width:804px;height:2px;background:#4a4a4a"></div>
<span class="t" style="left:13px;top:792px;color:#f0f0f0;font-size:11px">Listo</span>
<svg style="left:57px;top:793px" width="13" height="13" viewBox="0 0 13 13"><circle cx="2.500" cy="2.500" r="2" fill="#eee"/><rect x=".5" y="4.500" width="12" height="8" fill="none" stroke="#eee"/><path d="M2 7h9M2 9h9M2 11h9M5 5v8M8 5v8" stroke="#ddd" stroke-dasharray="1 1"/></svg>
<div style="left:502px;top:789px;width:38px;height:21px;background:#464646"></div>
<svg style="left:514px;top:793px" width="13" height="13" viewBox="0 0 13 13"><path d="M.5.500h12v12H.5zM0 4.500h13M0 8.500h13M4.500 0v13M8.500 0v13" fill="none" stroke="#eee"/></svg>
<svg style="left:552px;top:793px" width="15" height="14" viewBox="0 0 15 14"><path d="M.5.500h13v12H.5zM3.500 3.500h7v6h-7zM5 5.500h4M5 7.500h4" fill="none" stroke="#eee"/></svg>
<svg style="left:590px;top:792px" width="14" height="14" viewBox="0 0 14 14"><path d="M.5.500h13v12H.5z" fill="none" stroke="#eee"/><path d="M1 1h5v8H1zM8 1h5v6H8z" fill="#eee"/></svg>
<div style="left:621px;top:798px;width:6px;height:2px;background:#f2f2f2"></div>
<div style="left:631px;top:799px;width:100px;height:1px;background:#f2f2f2"></div>
<div style="left:679px;top:794px;width:4px;height:11px;background:#f2f2f2"></div>
<div style="left:735px;top:798px;width:8px;height:2px;background:#f2f2f2"></div>
<div style="left:738px;top:795px;width:2px;height:8px;background:#f2f2f2"></div>
<span class="t" style="left:760px;top:791px;color:#f0f0f0;font-size:11px">100 %</span>

<!-- right edge strip -->
<div style="left:809px;top:0;width:1px;height:812px;background:#8c8c8c"></div>
<div style="left:810px;top:0;width:2px;height:812px;background:#cfcfcf"></div>
<div style="left:810px;top:112px;width:2px;height:1px;background:#808080"></div>

</div></body></html>
